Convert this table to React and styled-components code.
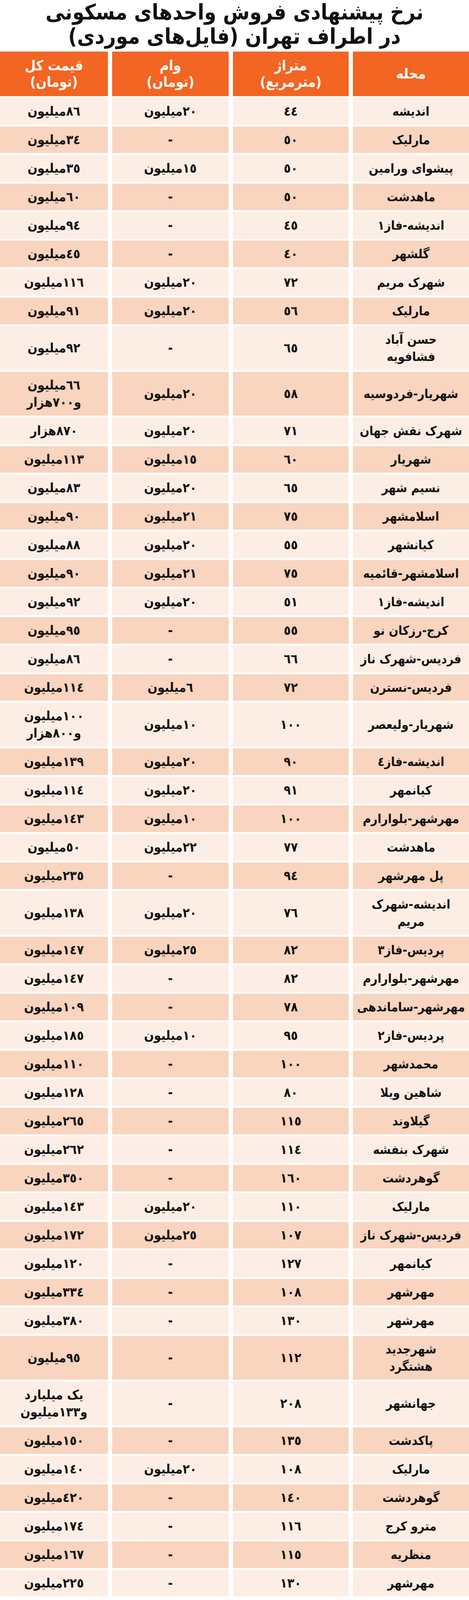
import React from "react";
import styled, { createGlobalStyle } from "styled-components";

const GlobalStyle = createGlobalStyle`
  html, body {
    margin: 0;
    padding: 0;
    background: #ffffff;
  }
  body {
    width: 1200px;
    overflow-x: hidden;
    font-family: "DejaVu Sans Condensed", "DejaVu Sans", sans-serif;
  }
`;

const Pagina = styled.div`
  width: 1200px;
  direction: rtl;
  background: #ffffff;
`;

const Titulo = styled.h1`
  margin: 0;
  padding: 0 0 8px 0;
  text-align: center;
  color: #111111;
  font-size: 55px;
  line-height: 62px;
  font-weight: 700;
  font-stretch: condensed;
  font-family: "DejaVu Sans Condensed", "DejaVu Sans", sans-serif;

  span {
    display: block;
    height: 62px;
  }
`;

const Tabela = styled.div`
  display: flex;
  flex-direction: column;
  gap: 5px;
`;

const Linha = styled.div`
  display: grid;
  grid-template-columns: 297px 296px 298px 1fr;
  column-gap: 11px;
`;

const Cabecalho = styled.div`
  display: flex;
  flex-direction: column;
  align-items: center;
  justify-content: center;
  height: 114px;
  background: #f26522;
  color: #ffffff;
  font-size: 36px;
  line-height: 42px;
  font-weight: 700;
  font-stretch: condensed;
  text-align: center;

  span {
    display: block;
    height: 42px;
  }
`;

const Celula = styled.div`
  display: flex;
  flex-direction: column;
  align-items: center;
  justify-content: center;
  padding: 12px 0;
  background: ${(p) => (p.$escuro ? "#f9d4be" : "#fdeee5")};
  color: #111111;
  font-size: ${(p) => (p.$nome ? "32px" : "33px")};
  line-height: 44px;
  font-weight: 700;
  font-stretch: condensed;
  text-align: center;
  white-space: nowrap;

  span {
    display: block;
    height: 44px;
  }
`;

const colunas = [
  ["محله"],
  ["متراژ", "(مترمربع)"],
  ["وام", "(تومان)"],
  ["قیمت کل", "(تومان)"],
];

const dados = [
  ["اندیشه", "٤٤", "٢٠میلیون", "٨٦میلیون"],
  ["مارلیک", "٥٠", "-", "٣٤میلیون"],
  ["پیشوای ورامین", "٥٠", "١٥میلیون", "٣٥میلیون"],
  ["ماهدشت", "٥٠", "-", "٦٠میلیون"],
  ["اندیشه-فاز١", "٤٥", "-", "٩٤میلیون"],
  ["گلشهر", "٤٠", "-", "٤٥میلیون"],
  ["شهرک مریم", "٧٢", "٢٠میلیون", "١١٦میلیون"],
  ["مارلیک", "٥٦", "٢٠میلیون", "٩١میلیون"],
  [["حسن آباد", "فشافویه"], "٦٥", "-", "٩٢میلیون"],
  ["شهریار-فردوسیه", "٥٨", "٢٠میلیون", ["٦٦میلیون", "و٧٠٠هزار"]],
  ["شهرک نقش جهان", "٧١", "٢٠میلیون", "٨٧٠هزار"],
  ["شهریار", "٦٠", "١٥میلیون", "١١٣میلیون"],
  ["نسیم شهر", "٦٥", "٢٠میلیون", "٨٣میلیون"],
  ["اسلامشهر", "٧٥", "٢١میلیون", "٩٠میلیون"],
  ["کیانشهر", "٥٥", "٢٠میلیون", "٨٨میلیون"],
  ["اسلامشهر-قائمیه", "٧٥", "٢١میلیون", "٩٠میلیون"],
  ["اندیشه-فاز١", "٥١", "٢٠میلیون", "٩٢میلیون"],
  ["کرج-رزکان نو", "٥٥", "-", "٩٥میلیون"],
  ["فردیس-شهرک ناز", "٦٦", "-", "٨٦میلیون"],
  ["فردیس-نسترن", "٧٢", "٦میلیون", "١١٤میلیون"],
  ["شهریار-ولیعصر", "١٠٠", "١٠میلیون", ["١٠٠میلیون", "و٨٠٠هزار"]],
  ["اندیشه-فاز٤", "٩٠", "٢٠میلیون", "١٣٩میلیون"],
  ["کیانمهر", "٩١", "٢٠میلیون", "١١٤میلیون"],
  ["مهرشهر-بلوارارم", "١٠٠", "١٠میلیون", "١٤٣میلیون"],
  ["ماهدشت", "٧٧", "٢٢میلیون", "٥٠میلیون"],
  ["پل مهرشهر", "٩٤", "-", "٢٣٥میلیون"],
  [["اندیشه-شهرک", "مریم"], "٧٦", "٢٠میلیون", "١٣٨میلیون"],
  ["پردیس-فاز٣", "٨٢", "٢٥میلیون", "١٤٧میلیون"],
  ["مهرشهر-بلوارارم", "٨٢", "-", "١٤٧میلیون"],
  ["مهرشهر-ساماندهی", "٧٨", "-", "١٠٩میلیون"],
  ["پردیس-فاز٢", "٩٥", "١٠میلیون", "١٨٥میلیون"],
  ["محمدشهر", "١٠٠", "-", "١١٠میلیون"],
  ["شاهین ویلا", "٨٠", "-", "١٢٨میلیون"],
  ["گیلاوند", "١١٥", "-", "٢٦٥میلیون"],
  ["شهرک بنفشه", "١١٤", "-", "٢٦٢میلیون"],
  ["گوهردشت", "١٦٠", "-", "٣٥٠میلیون"],
  ["مارلیک", "١١٠", "٢٠میلیون", "١٤٣میلیون"],
  ["فردیس-شهرک ناز", "١٠٧", "٢٥میلیون", "١٧٢میلیون"],
  ["کیانمهر", "١٢٧", "-", "١٢٠میلیون"],
  ["مهرشهر", "١٠٨", "-", "٣٣٤میلیون"],
  ["مهرشهر", "١٣٠", "-", "٣٨٠میلیون"],
  [["شهرجدید", "هشتگرد"], "١١٢", "-", "٩٥میلیون"],
  ["جهانشهر", "٢٠٨", "-", ["یک میلیارد", "و١٣٣میلیون"]],
  ["پاکدشت", "١٣٥", "-", "١٥٠میلیون"],
  ["مارلیک", "١٠٨", "٢٠میلیون", "١٤٠میلیون"],
  ["گوهردشت", "١٤٠", "-", "٤٢٠میلیون"],
  ["مترو کرج", "١١٦", "-", "١٧٤میلیون"],
  ["منظریه", "١١٥", "-", "١٦٧میلیون"],
  ["مهرشهر", "١٣٠", "-", "٢٢٥میلیون"],
];

// cada valor pode ser texto ou lista de linhas
const linhas = (valor) =>
  (Array.isArray(valor) ? valor : [valor]).map((t, i) => <span key={i}>{t}</span>);

export default function App() {
  return (
    <Pagina>
      <GlobalStyle />
      <Titulo>
        <span>نرخ پیشنهادی فروش واحدهای مسکونی</span>
        <span>در اطراف تهران (فایل‌های موردی)</span>
      </Titulo>

      <Tabela>
        <Linha>
          {colunas.map((c, i) => (
            <Cabecalho key={i}>{linhas(c)}</Cabecalho>
          ))}
        </Linha>

        {dados.map((itens, index) => (
          <Linha key={index}>
            {itens.map((valor, j) => (
              <Celula key={j} $nome={j === 0} $escuro={index % 2 === 1}>
                {linhas(valor)}
              </Celula>
            ))}
          </Linha>
        ))}
      </Tabela>
    </Pagina>
  );
}
